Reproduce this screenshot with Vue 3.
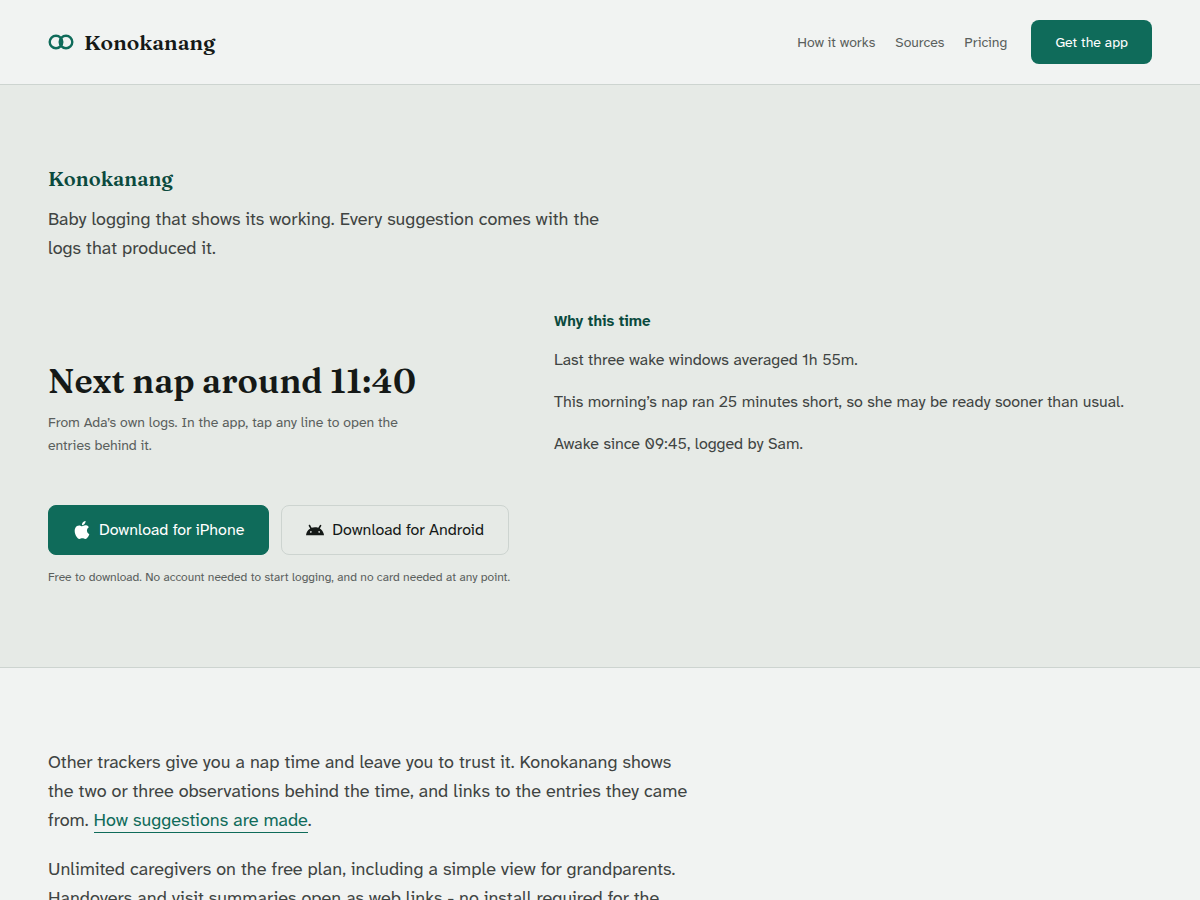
<script setup>
const links = ['How it works', 'Sources', 'Pricing']
const reasons = [
  'Last three wake windows averaged 1h 55m.',
  'This morning’s nap ran 25 minutes short, so she may be ready sooner than usual.',
  'Awake since 09:45, logged by Sam.'
]
</script>

<template>
  <header class="site-header">
    <a class="brand" href="#">
      <svg class="mark" viewBox="0 0 26 16" aria-hidden="true">
        <circle cx="8" cy="8" r="6.3" />
        <circle cx="18" cy="8" r="6.3" />
      </svg>
      <span>Konokanang</span>
    </a>
    <nav class="nav">
      <a v-for="link in links" :key="link" href="#">{{ link }}</a>
      <a class="cta" href="#">Get the app</a>
    </nav>
  </header>

  <main>
    <section class="hero">
      <h1 class="name">Konokanang</h1>
      <p class="lead">Baby logging that shows its working. Every suggestion comes with the logs that produced it.</p>

      <div class="example">
        <div class="prediction">
          <h2>Next nap around 11:40</h2>
          <p>From Ada’s own logs. In the app, tap any line to open the entries behind it.</p>
        </div>
        <div class="reasons">
          <h3>Why this time</h3>
          <ul>
            <li v-for="reason in reasons" :key="reason">{{ reason }}</li>
          </ul>
        </div>
      </div>

      <div class="downloads">
        <a class="download primary" href="#">
          <svg viewBox="0 0 24 24" aria-hidden="true">
            <path d="M12.152 6.896c-.948 0-2.415-1.078-3.96-1.04-2.04.027-3.91 1.183-4.961 3.014-2.117 3.675-.546 9.103 1.519 12.09 1.013 1.454 2.208 3.09 3.792 3.039 1.52-.065 2.09-.987 3.935-.987 1.831 0 2.35.987 3.96.948 1.637-.026 2.676-1.48 3.676-2.948 1.156-1.688 1.636-3.325 1.662-3.415-.039-.013-3.182-1.221-3.22-4.857-.026-3.04 2.48-4.494 2.597-4.559-1.429-2.09-3.623-2.324-4.39-2.376-2-.156-3.675 1.09-4.61 1.09zM15.53 3.83c.843-1.012 1.4-2.427 1.245-3.83-1.207.052-2.662.805-3.532 1.818-.78.896-1.454 2.338-1.273 3.714 1.338.104 2.715-.688 3.559-1.701" />
          </svg>
          Download for iPhone
        </a>
        <a class="download" href="#">
          <svg viewBox="0 0 24 24" aria-hidden="true">
            <path d="M18.4395 5.5586c-.675 1.1664-1.352 2.3318-2.0274 3.498-.0366-.0155-.0742-.0286-.1113-.043-1.8249-.6957-3.484-.8-4.42-.787-1.8551.0185-3.3544.4643-4.2597.8203-.084-.1494-1.7526-3.021-2.0215-3.4864a1.1451 1.1451 0 0 0-.1406-.1914c-.3312-.364-.9054-.4859-1.379-.203-.475.282-.7136.9361-.3886 1.5019 1.9466 3.3696-.0966-.2158 1.9473 3.3593.0172.031-.4946.2642-1.3926 1.0177C2.8987 12.176.452 14.772 0 18.9902h24c-.119-1.1108-.3686-2.099-.7461-3.0683-.7438-1.9118-1.8435-3.2928-2.7402-4.1836a12.1048 12.1048 0 0 0-2.1309-1.6875c.6594-1.122 1.312-2.2559 1.9649-3.3848.2077-.3615.1886-.7956-.0079-1.1191a1.1001 1.1001 0 0 0-.8515-.5332c-.5225-.0536-.9392.3128-1.0488.5449zm-.0391 8.461c.3944.5926.324 1.3306-.1563 1.6503-.4799.3197-1.188.0985-1.582-.4941-.3944-.5927-.324-1.3307.1563-1.6504.4727-.315 1.1812-.1086 1.582.4941zM7.207 13.5273c.4803.3197.5506 1.0577.1563 1.6504-.394.5926-1.1038.8138-1.584.4941-.48-.3197-.5503-1.0577-.1563-1.6504.4008-.6021 1.1087-.8106 1.584-.4941z" />
          </svg>
          Download for Android
        </a>
      </div>
      <p class="fine">Free to download. No account needed to start logging, and no card needed at any point.</p>
    </section>

    <section class="about">
      <p>Other trackers give you a nap time and leave you to trust it. Konokanang shows the two or three observations behind the time, and links to the entries they came from. <a href="#">How suggestions are made</a>.</p>
      <p>Unlimited caregivers on the free plan, including a simple view for grandparents. Handovers and visit summaries open as web links - no install required for the</p>
    </section>
  </main>
</template>

<style>
html {
  background: #f1f3f2;
}
</style>

<style scoped>
.site-header,
main {
  font-family: "Atkinson Hyperlegible Next", "Noto Sans", sans-serif;
  color: #3f4442;
}
h1, h2, h3, p, ul {
  margin: 0;
}
a {
  color: inherit;
  text-decoration: none;
}
.site-header {
  display: flex;
  align-items: center;
  justify-content: space-between;
  padding: 20px 48px;
  border-bottom: 1px solid #cdd4d0;
}
.brand {
  display: flex;
  align-items: center;
  gap: 10px;
  font: 600 21px/28px Fraunces, "Liberation Serif", serif;
  color: #151917;
}
.mark {
  width: 26px;
  height: 16px;
  fill: none;
  stroke: #0f6b5a;
  stroke-width: 2.4;
}
.nav {
  display: flex;
  align-items: center;
  gap: 20px;
  font-size: 14px;
  line-height: 20px;
  color: #5a605d;
}
.cta {
  margin-left: 4px;
  padding: 12px 24px;
  border-radius: 8px;
  background: #0f6b5a;
  color: #fff;
}
.hero {
  padding: 80px 48px;
  background: #e6eae6;
  border-bottom: 1px solid #cdd4d0;
}
.name {
  font: 600 20px/28px Fraunces, "Liberation Serif", serif;
  color: #0b4a3e;
}
.lead {
  max-width: 580px;
  margin-top: 12px;
  font-size: 18px;
  line-height: 29px;
}
.example {
  display: grid;
  grid-template-columns: 17fr 23fr;
  gap: 64px;
  align-items: end;
  margin-top: 48px;
}
.prediction h2 {
  font: 600 34px/44px Fraunces, "Liberation Serif", serif;
  color: #151917;
}
.prediction p {
  max-width: 380px;
  margin-top: 8px;
  font-size: 14px;
  line-height: 23px;
  color: #5a605d;
}
.reasons h3 {
  font-size: 15px;
  line-height: 20px;
  color: #0b4a3e;
}
.reasons ul {
  display: grid;
  gap: 16px;
  margin-top: 16px;
  padding: 0;
  list-style: none;
  font-size: 16px;
  line-height: 26px;
}
.downloads {
  display: flex;
  flex-wrap: wrap;
  gap: 12px;
  margin-top: 48px;
}
.download {
  display: flex;
  align-items: center;
  gap: 8px;
  padding: 12px 24px;
  border: 1px solid #cdd4d0;
  border-radius: 8px;
  font-size: 16px;
  line-height: 24px;
  color: #151917;
}
.download svg {
  width: 18px;
  height: 18px;
  fill: currentColor;
}
.download.primary {
  border-color: #0f6b5a;
  background: #0f6b5a;
  color: #fff;
}
.fine {
  margin-top: 12px;
  font-size: 12px;
  line-height: 20px;
  color: #5a605d;
}
.about {
  padding: 80px 48px;
  font-size: 18px;
  line-height: 29px;
}
.about p {
  max-width: 648px;
}
.about p + p {
  margin-top: 20px;
}
.about a {
  border-bottom: 1px solid #0f6b5a;
  color: #0f6b5a;
}
</style>
